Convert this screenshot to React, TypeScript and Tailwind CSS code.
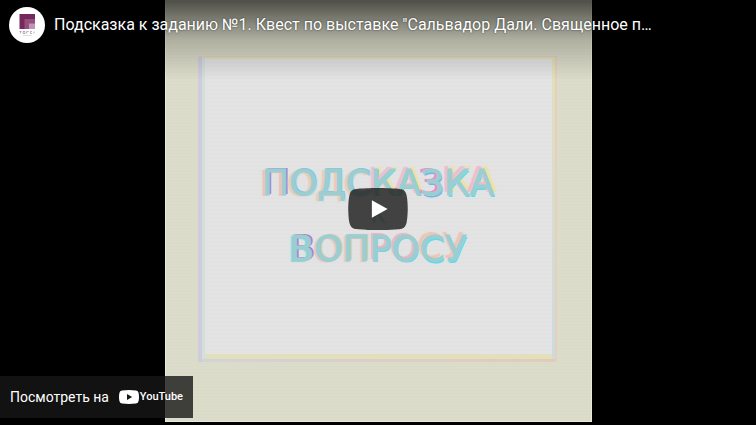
function ChannelAvatar() {
  return (
    <a href="#channel" aria-label="Канал" className="block size-9 shrink-0">
      <svg viewBox="0 0 36 36" className="size-full" aria-hidden="true">
        <circle cx="18" cy="18" r="18" fill="#fff" />
        <rect x="10.5" y="7" width="15.5" height="15" fill="#74295a" />
        <rect x="15.5" y="12" width="10.5" height="10" fill="#94507c" />
        <rect x="20" y="16.5" width="6" height="5.5" fill="#c294b4" />
        <path d="M10.5 24.5h2m-1 0v2M14 24.5h2v2h-2zM17.7 26.5v-2h2M23 24.5h-1.5v2H23M25 24.5v2" stroke="#8d8089" strokeWidth=".6" fill="none" />
        <path d="M14 28.5h9" stroke="#d5d0d4" strokeWidth=".7" />
      </svg>
    </a>
  );
}

function Poster() {
  return (
    <div className="flex h-[422px] w-[427px] max-w-full flex-col border border-[#e9e9d8] bg-[#dadbc8] bg-[repeating-linear-gradient(to_bottom,#dbdcc9_0px,#dbdcc9_2px,#d8d9c6_3px)] pt-[55px] pr-[34px] pb-[59px] pl-8">
      <div className="flex flex-1 flex-col bg-[linear-gradient(to_right,#e6cfbc,#e6cfbc)] pt-px pr-0.5">
        <div className="flex flex-1 flex-col bg-[linear-gradient(to_right,#cfcddb_0px,#cfcddb_4px,transparent_4px),linear-gradient(to_right,#d3d2da,#e3cbb8)] pb-[3px] pl-1">
          <div className="flex flex-1 flex-col bg-[linear-gradient(to_right,#d3dfdd_0px,#d3dfdd_4px,transparent_4px),linear-gradient(to_bottom,#e2e0b8,#cadbe2)] pt-0.5 pr-[3px] pl-[3px]">
            <div className="flex flex-1 flex-col items-center justify-center border-b-[5px] border-[#e1e0ba] bg-[#e2e2e2] bg-[repeating-linear-gradient(to_bottom,#e3e3e3_0px,#e3e3e3_3px,#dfdfdf_4px)] pt-[18px] text-center font-['DejaVu_Sans',sans-serif] text-4xl leading-[33px] text-[#9ccdd0] [-webkit-text-stroke:1px_#9ccdd0]">
              <p>
                <span className="[text-shadow:2px_-1px_0px_#a38bd5,-3px_1px_1px_#edc0b0]">П</span>
                <span className="[text-shadow:-3px_1px_1px_#ebcbb0,1px_-1px_0px_#70c5e5,2px_1px_1px_#b5d9dd]">ОДС</span>
                <span className="[text-shadow:-3px_-2px_1px_#eebccf,1px_1px_0px_#62d7e8,3px_-2px_1px_#efe0a8]">КА</span>
                <span className="[text-shadow:-3px_-1px_0px_#e68fca,1px_2px_0px_#6fb8ea]">З</span>
                <span className="[text-shadow:-3px_-3px_1px_#eebccb,1px_2px_0px_#60dce9,3px_-3px_1px_#efe0a8]">КА</span>
              </p>
              <p className="text-xl leading-[33px]">К</p>
              <p>
                <span className="[text-shadow:2px_-1px_0px_#ad7cd6,-2px_1px_1px_#8cd9db]">В</span>
                <span className="[text-shadow:-2px_1px_1px_#eac5b3,2px_-1px_1px_#bccbb8]">ОП</span>
                <span className="[text-shadow:-2px_-2px_1px_#e9b3bd,1px_1px_0px_#68d3e2]">РО</span>
                <span className="[text-shadow:-3px_-3px_1px_#efc4b3,1px_2px_0px_#5cdcea]">СУ</span>
              </p>
            </div>
          </div>
        </div>
      </div>
    </div>
  );
}

function PlayButton() {
  return (
    <button type="button" aria-label="Смотреть" className="absolute inset-0 flex items-center justify-center pb-[7px]">
      <svg viewBox="0 0 68 48" className="h-[42px] w-[60px]" aria-hidden="true">
        <path d="M66.52 7.74c-.78-2.93-2.49-5.41-5.42-6.19C55.79.13 34 0 34 0S12.21.13 6.9 1.55C3.97 2.33 2.27 4.81 1.48 7.74.06 13.05 0 24 0 24s.06 10.95 1.48 16.26c.78 2.93 2.49 5.41 5.42 6.19C12.21 47.87 34 48 34 48s21.79-.13 27.1-1.55c2.93-.78 4.64-3.26 5.42-6.19C67.94 34.95 68 24 68 24s-.06-10.95-1.48-16.26z" fill="#212121" fillOpacity=".83" />
        <path d="M45 24 27 14v20z" fill="#fff" />
      </svg>
    </button>
  );
}

function WatchOnYouTube() {
  return (
    <a href="#youtube" className="absolute bottom-[7px] left-0 flex h-[42px] w-[193px] items-center bg-[#171717]/80 px-[10px] text-sm text-white">
      <span className="w-[111px]">Посмотреть на</span>
      <span className="flex items-center gap-px">
        <svg viewBox="0 0 20 14" className="h-[14px] w-5 shrink-0" aria-hidden="true">
          <path d="M3 .4Q10-.4 17 .4q2.3.2 2.6 2.6.8 4 0 8-.3 2.4-2.6 2.6-7 .8-14 0Q.7 13.4.4 11q-.8-4 0-8Q.7.6 3 .4z" fill="#fff" />
          <path d="m8 4 5.2 3L8 10z" fill="#171717" />
        </svg>
        <span className="text-[11px] font-medium">YouTube</span>
      </span>
    </a>
  );
}

export default function App() {
  return (
    <main className="relative flex h-screen w-full justify-center overflow-hidden bg-black font-['Roboto',sans-serif]">
      <Poster />
      <div className="absolute inset-x-0 top-0 h-20 bg-linear-to-b from-black/65 via-black/20 via-50% to-transparent" />
      <PlayButton />
      <header className="absolute inset-x-0 top-0 flex items-center gap-[9px] py-[7px] pr-[100px] pl-[9px]">
        <ChannelAvatar />
        <h1 className="min-w-0 truncate text-base text-white [text-shadow:0_0_2px_#000000aa]">
          <a href="#video">Подсказка к заданию №1. Квест по выставке "Сальвадор Дали. Священное п…</a>
        </h1>
      </header>
      <WatchOnYouTube />
    </main>
  );
}
